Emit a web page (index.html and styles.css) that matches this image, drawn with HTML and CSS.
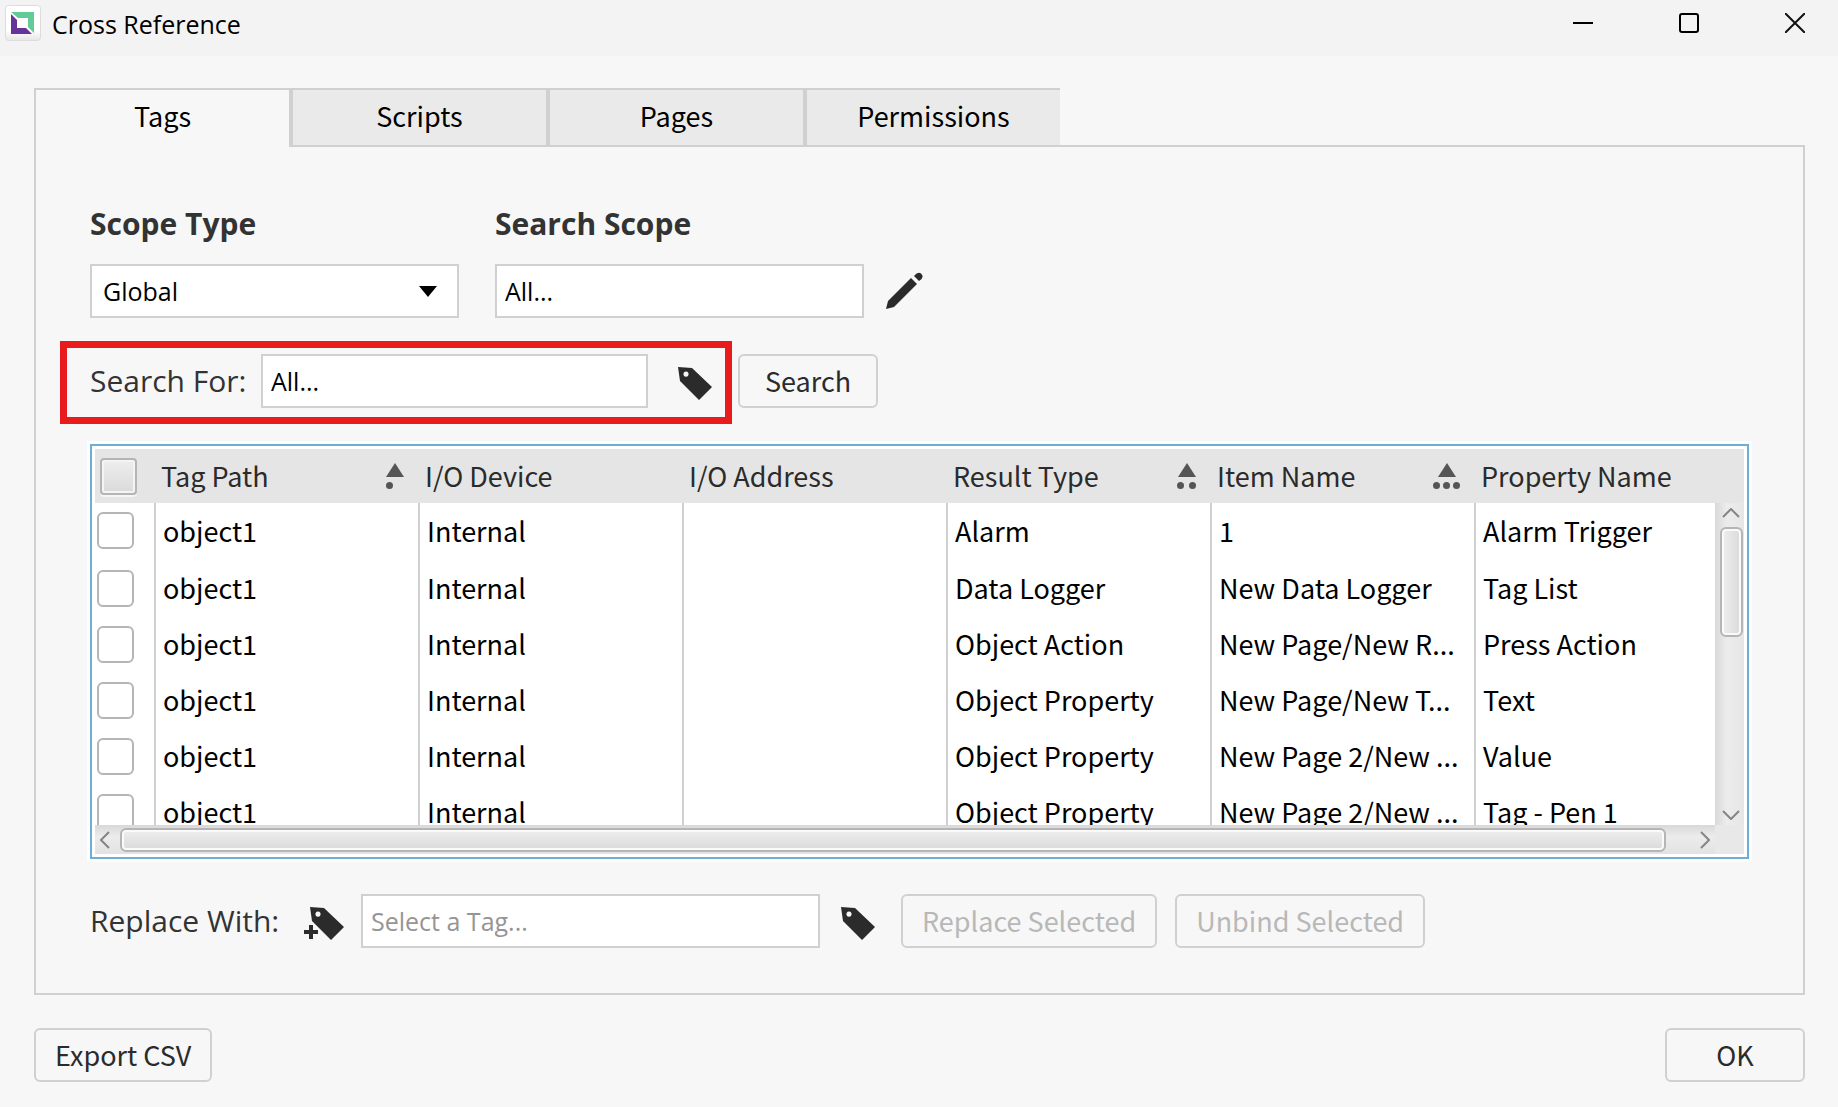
FILE: index.html
```html
<!DOCTYPE html>
<html lang="en">

<head>
    <meta charset="UTF-8">
    <meta name="viewport" content="width=device-width, initial-scale=1.0">
    <title>Cross Reference</title>
    <link rel="stylesheet" href="styles.css">
</head>

<body>
    <!-- shared icons -->
    <svg class="defs" width="0" height="0">
        <symbol id="tag" viewBox="0 0 34 34">
            <path fill-rule="evenodd" d="M0 1 L14 2 L34 21 L21 34 L2 15 Z M8 5.500a2.600 2.600 0 1 0 .01 0Z"/>
        </symbol>
    </svg>

    <div class="window">
        <header class="titlebar">
            <svg class="logo" width="36" height="36" viewBox="0 0 36 36">
                <defs>
                    <linearGradient id="logoBg" x1="0" y1="0" x2="0" y2="1">
                        <stop offset="0.7" stop-color="#fff"/>
                        <stop offset="1" stop-color="#e6e6e6"/>
                    </linearGradient>
                </defs>
                <rect x="0.500" y="0.500" width="35" height="35" rx="3" fill="url(#logoBg)" stroke="#dcdcdc"/>
                <path d="M6 7H29V28L23 22V13H13Z" fill="#62cc98"/>
                <path d="M6 9L12 15V23H21L27 29H6Z" fill="#663399"/>
            </svg>
            <h1>Cross Reference</h1>
            <div class="controls">
                <button type="button" aria-label="Minimize">
                    <svg width="20" height="20"><path d="M0 10H20" stroke="#000" stroke-width="2"/></svg>
                </button>
                <button type="button" aria-label="Maximize">
                    <svg width="20" height="20"><rect x="1" y="1" width="18" height="18" rx="2" fill="none" stroke="#000" stroke-width="2"/></svg>
                </button>
                <button type="button" aria-label="Close">
                    <svg width="20" height="20"><path d="M0 0L20 20M20 0L0 20" stroke="#111" stroke-width="2"/></svg>
                </button>
            </div>
        </header>

        <main class="content">
            <nav class="tabs">
                <button type="button" class="tab active">Tags</button>
                <button type="button" class="tab">Scripts</button>
                <button type="button" class="tab">Pages</button>
                <button type="button" class="tab">Permissions</button>
                <div class="tabs-line"></div>
            </nav>

            <section class="panel">
                <div class="scope">
                    <div class="field">
                        <label for="scopeType">Scope Type</label>
                        <div class="select">
                            <select id="scopeType">
                                <option>Global</option>
                            </select>
                            <svg class="arrow" width="18" height="11"><path d="M0 0H18L9 11Z"/></svg>
                        </div>
                    </div>
                    <div class="field">
                        <label for="searchScope">Search Scope</label>
                        <input type="text" id="searchScope" value="All...">
                    </div>
                    <button type="button" class="icon edit" aria-label="Edit scope">
                        <svg width="37" height="37" viewBox="0 0 37 37">
                            <path d="M0 37L2 29L25 6L31 12L8 35Z"/>
                            <path d="M28 4Q32 -1 35 1.500Q39 5 33 9Z"/>
                        </svg>
                    </button>
                </div>

                <div class="search">
                    <div class="highlight">
                        <label for="searchFor">Search For:</label>
                        <input type="text" id="searchFor" value="All...">
                        <button type="button" class="icon" aria-label="Pick tag">
                            <svg width="34" height="34"><use href="#tag"/></svg>
                        </button>
                    </div>
                    <button type="button" class="btn">Search</button>
                </div>

                <div class="grid">
                    <div class="head">
                        <div class="rows">
                            <table>
                                <colgroup>
                                    <col class="c-check"><col class="c"><col class="c"><col class="c"><col class="c"><col class="c"><col>
                                </colgroup>
                                <thead>
                                    <tr>
                                        <th><input type="checkbox" aria-label="Select all"></th>
                                        <th><div class="th">Tag Path
                                            <svg width="18" height="27"><path d="M9 0L18 14H0Z"/><circle cx="3.500" cy="22.500" r="3.500"/></svg></div></th>
                                        <th>I/O Device</th>
                                        <th>I/O Address</th>
                                        <th><div class="th">Result Type
                                            <svg width="19" height="27"><path d="M10 0L19 14H1Z"/><circle cx="3.500" cy="22.500" r="3.500"/><circle cx="15.500" cy="22.500" r="3.500"/></svg></div></th>
                                        <th><div class="th">Item Name
                                            <svg width="27" height="27"><path d="M14 0L23 14H5Z"/><circle cx="3.500" cy="22.500" r="3.500"/><circle cx="13.500" cy="22.500" r="3.500"/><circle cx="23.500" cy="22.500" r="3.500"/></svg></div></th>
                                        <th>Property Name</th>
                                    </tr>
                                </thead>
                                <tbody>
                                    <tr>
                                        <td><input type="checkbox" aria-label="Select row 1"></td>
                                        <td>object1</td>
                                        <td>Internal</td>
                                        <td></td>
                                        <td>Alarm</td>
                                        <td>1</td>
                                        <td>Alarm Trigger</td>
                                    </tr>
                                    <tr>
                                        <td><input type="checkbox" aria-label="Select row 2"></td>
                                        <td>object1</td>
                                        <td>Internal</td>
                                        <td></td>
                                        <td>Data Logger</td>
                                        <td>New Data Logger</td>
                                        <td>Tag List</td>
                                    </tr>
                                    <tr>
                                        <td><input type="checkbox" aria-label="Select row 3"></td>
                                        <td>object1</td>
                                        <td>Internal</td>
                                        <td></td>
                                        <td>Object Action</td>
                                        <td>New Page/New R...</td>
                                        <td>Press Action</td>
                                    </tr>
                                    <tr>
                                        <td><input type="checkbox" aria-label="Select row 4"></td>
                                        <td>object1</td>
                                        <td>Internal</td>
                                        <td></td>
                                        <td>Object Property</td>
                                        <td>New Page/New T...</td>
                                        <td>Text</td>
                                    </tr>
                                    <tr>
                                        <td><input type="checkbox" aria-label="Select row 5"></td>
                                        <td>object1</td>
                                        <td>Internal</td>
                                        <td></td>
                                        <td>Object Property</td>
                                        <td>New Page 2/New ...</td>
                                        <td>Value</td>
                                    </tr>
                                    <tr>
                                        <td><input type="checkbox" aria-label="Select row 6"></td>
                                        <td>object1</td>
                                        <td>Internal</td>
                                        <td></td>
                                        <td>Object Property</td>
                                        <td>New Page 2/New ...</td>
                                        <td>Tag - Pen 1</td>
                                    </tr>
                                </tbody>
                            </table>
                        </div>
                        <div class="vside">
                            <div class="vbar">
                                <svg width="18" height="10"><path d="M1 9L9 1L17 9"/></svg>
                                <div class="vthumb"></div>
                                <svg class="down" width="18" height="10"><path d="M1 1L9 9L17 1"/></svg>
                            </div>
                        </div>
                    </div>
                    <div class="foot">
                        <div class="hbar">
                            <svg width="10" height="18"><path d="M9 1L1 9L9 17"/></svg>
                            <div class="hthumb"></div>
                            <svg width="10" height="18"><path d="M1 1L9 9L1 17"/></svg>
                        </div>
                        <div class="corner"></div>
                    </div>
                </div>

                <div class="replace">
                    <label for="replaceWith">Replace With:</label>
                    <button type="button" class="icon add" aria-label="Add tag">
                        <svg width="40" height="34" viewBox="0 0 40 34">
                            <use href="#tag" x="6" width="34" height="34"/>
                            <path d="M5 19H9V24H14V28H9V33H5V28H0V24H5Z"/>
                        </svg>
                    </button>
                    <input type="text" id="replaceWith" placeholder="Select a Tag...">
                    <button type="button" class="icon pick" aria-label="Pick replacement tag">
                        <svg width="34" height="34"><use href="#tag"/></svg>
                    </button>
                    <button type="button" class="btn" disabled>Replace Selected</button>
                    <button type="button" class="btn" disabled>Unbind Selected</button>
                </div>
            </section>

            <footer class="actions">
                <button type="button" class="btn">Export CSV</button>
                <button type="button" class="btn">OK</button>
            </footer>
        </main>
    </div>
</body>

</html>
```
FILE: styles.css
```css
* {
    box-sizing: border-box;
}
body {
    margin: 0;
    background-color: #f7f7f7;
    font-family: "Open Sans", sans-serif;
    font-size: 25px;
    color: #000;
}
button , input , select {
    margin: 0;
    padding: 0;
    font: inherit;
    color: inherit;
}
button {
    border: 0;
    background: none;
}
svg {
    display: block;
    flex: none;
}
.defs {
    position: absolute;
}

/* title bar */
.titlebar {
    display: flex;
    align-items: flex-start;
    height: 56px;
    padding: 5px 33px 0 5px;
    background-color: #f3f3f3;
}
.titlebar h1 {
    flex: 1;
    margin: 0 0 0 11px;
    font-size: 25px;
    font-weight: normal;
    line-height: 38px;
}
.controls {
    display: flex;
    gap: 86px;
    padding-top: 8px;
}

.content {
    padding: 32px 33px 23px 34px;
}

/* tabs */
.tabs {
    display: flex;
}
.tab {
    width: 257px;
    height: 59px;
    padding-bottom: 4px;
    border: 2px solid #d0d0d0;
    background-color: #eaeaea;
    font-family: "Noto Sans CJK SC", sans-serif;
    font-size: 27px;
    line-height: 40px;
}
.tab:nth-child(4) {
    width: 255px;
    border-right: 0;
}
.tab.active {
    padding-bottom: 6px;
    border-bottom: 0;
    background-color: #f7f7f7;
}
.tabs-line {
    flex: 1;
    border-bottom: 2px solid #d0d0d0;
}

.panel {
    padding: 57px 54px 45px;
    border: 2px solid #d0d0d0;
    border-top: 0;
}

/* fields */
input[type="text"] , select {
    display: block;
    width: 100%;
    height: 54px;
    padding: 0 8px;
    border: 2px solid #d0d0d0;
    border-radius: 0;
    background-color: #fff;
}
input::placeholder {
    color: #959595;
    opacity: 1;
}
select {
    appearance: none;
    padding-left: 11px;
}
label {
    font-size: 30px;
    line-height: 40px;
    color: #333;
    white-space: nowrap;
}
.scope {
    display: flex;
    align-items: flex-end;
    gap: 36px;
}
.field {
    width: 369px;
}
.field label {
    display: block;
    margin-bottom: 20px;
    font-weight: bold;
}
.select {
    position: relative;
}
.select .arrow {
    position: absolute;
    right: 22px;
    top: 22px;
    pointer-events: none;
}
.icon {
    flex: none;
    padding-top: 4px;
    fill: #2b2b2b;
}
.icon.edit {
    margin: 0 0 9px -14px;
}

.btn {
    min-width: 140px;
    height: 54px;
    padding: 0 19px;
    border: 2px solid #d0d0d0;
    border-radius: 6px;
    font-family: "Noto Sans CJK SC", sans-serif;
    font-size: 27px;
    line-height: 40px;
    color: #2b2b2b;
    white-space: nowrap;
}
.btn:disabled {
    color: #b8b8b8;
}

/* search row */
.search {
    display: flex;
    align-items: flex-start;
    gap: 6px;
    margin: 23px 0 20px -30px;
}
.search .btn {
    margin-top: 13px;
}
.highlight {
    display: flex;
    align-items: center;
    padding: 6px 13px 9px 23px;
    border: 7px solid #e81c1c;
}
.highlight label {
    width: 171px;
}
.highlight input {
    width: 387px;
    margin-right: 30px;
}

/* result grid */
.grid {
    padding: 3px;
    border: 2px solid #6baed6;
    background-color: #fff;
    box-shadow: 0 0 0 3px #fdfdfd;
}
.head , .foot {
    display: flex;
}
.rows {
    flex: 1;
    min-width: 0;
    height: 376px;
    overflow: hidden;
}
table {
    width: 100%;
    table-layout: fixed;
    border-collapse: separate;
    border-spacing: 0;
    font-family: "Noto Sans CJK SC", sans-serif;
    font-size: 27px;
    line-height: 40px;
}
.c-check {
    width: 61px;
}
.c {
    width: 264px;
}
th {
    height: 54px;
    padding: 0 0 0 5px;
    background-color: #e5e5e5;
    font-weight: normal;
    text-align: left;
    color: #2b2b2b;
    white-space: nowrap;
}
.th {
    display: flex;
    align-items: center;
    justify-content: space-between;
    padding-right: 16px;
}
.th svg {
    fill: #555;
}
td {
    height: 56px;
    padding: 0 0 0 7px;
    border-right: 2px solid #d0d0d0;
    white-space: nowrap;
}
td:first-child {
    padding-left: 2px;
}
td:last-child {
    border-right: 0;
}
tbody tr:first-child td {
    height: 57px;
    padding-bottom: 2px;
}
input[type="checkbox"] {
    appearance: none;
    display: block;
    width: 37px;
    height: 37px;
    border: 2px solid #b5b5b5;
    border-radius: 6px;
    background-color: #fff;
}
th input[type="checkbox"] {
    border-radius: 4px;
    background: linear-gradient(#eee, #dadada);
    box-shadow: inset 0 0 0 2px #f4f4f4, 0 2px 0 #f5f5f5;
}

/* scroll bars */
.vside {
    width: 29px;
    padding-top: 54px;
    background-color: #e5e5e5;
}
.vbar {
    display: flex;
    flex-direction: column;
    align-items: center;
    height: 100%;
    padding: 5px 0 5px 2px;
    background: linear-gradient(to right, #d8d8d8, #ececec 40%, #e6e6e6);
}
.vbar svg , .hbar svg {
    fill: none;
    stroke: #858585;
    stroke-width: 2px;
}
.vthumb {
    width: 23px;
    height: 110px;
    margin: 9px 0 auto 2px;
    border: 2px solid #b5b5b5;
    border-radius: 6px;
    background: linear-gradient(to right, #eee, #dadada);
    box-shadow: inset 0 0 0 2px #fafafa;
}
.hbar {
    display: flex;
    flex: 1;
    align-items: center;
    height: 29px;
    padding: 0 5px;
    background: linear-gradient(#d8d8d8, #ececec 40%, #e2e2e2);
}
.hthumb {
    flex: 1;
    height: 24px;
    margin: 0 34px 0 10px;
    border: 2px solid #b5b5b5;
    border-radius: 6px;
    background: linear-gradient(#eee, #dadada);
    box-shadow: inset 0 0 0 2px #fafafa;
}
.corner {
    width: 29px;
    background-color: #e8e8e8;
}

/* replace row */
.replace {
    display: flex;
    align-items: center;
    margin-top: 35px;
}
.replace label {
    width: 214px;
}
.replace input {
    width: 459px;
    margin: 0 21px 0 17px;
}
.replace .pick {
    margin-right: 8px;
}
.replace .btn {
    margin-left: 18px;
}

.actions {
    display: flex;
    justify-content: space-between;
    margin-top: 33px;
}
```
